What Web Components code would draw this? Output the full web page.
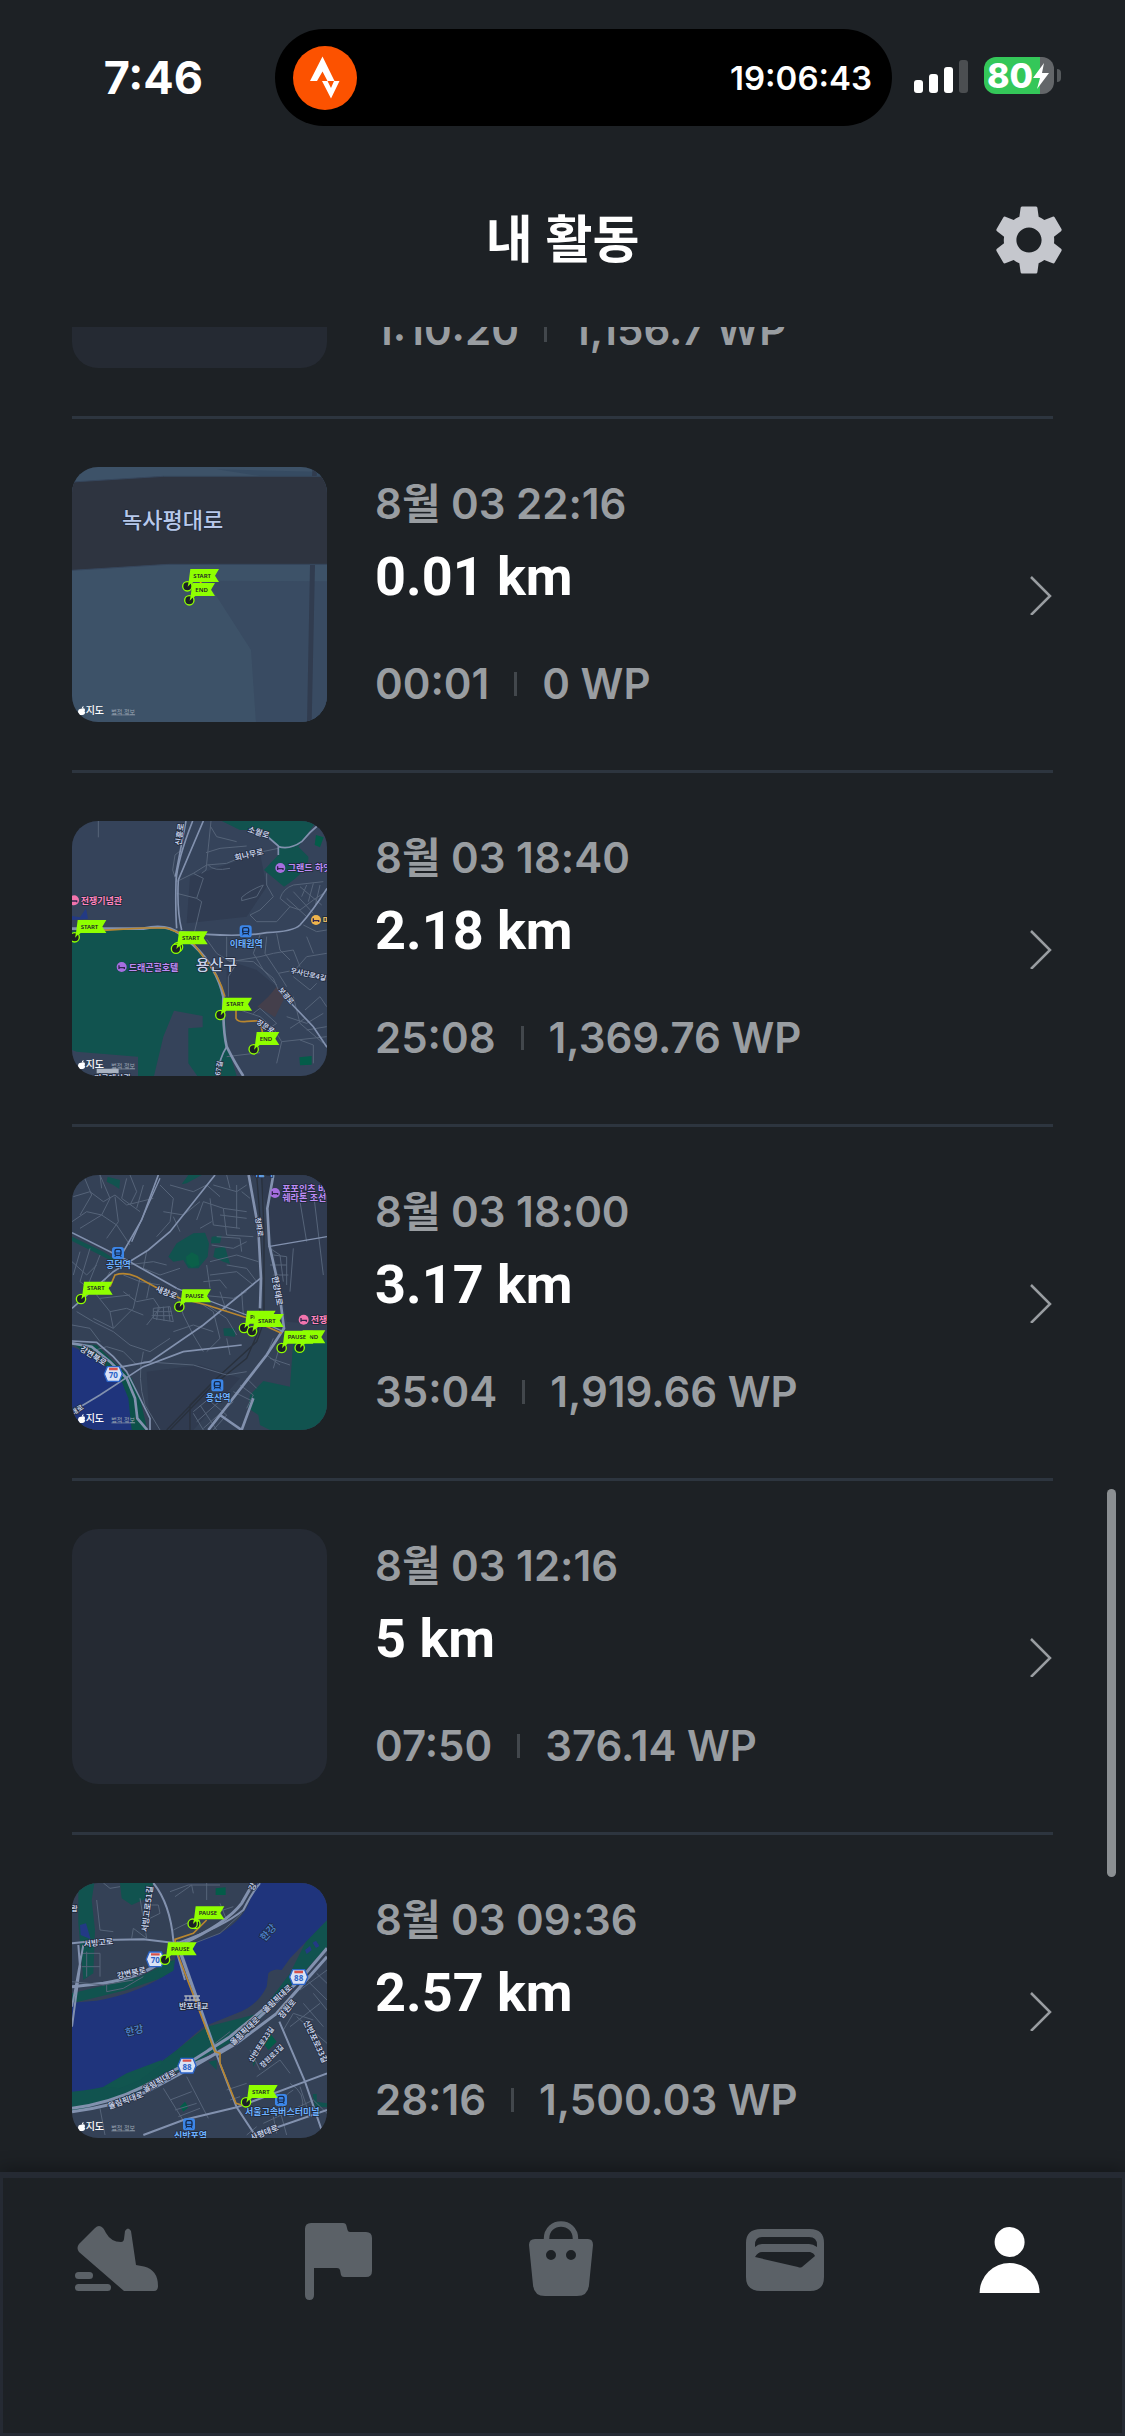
<!DOCTYPE html>
<html lang="ko">
<head>
<meta charset="utf-8">
<meta name="viewport" content="width=device-width, initial-scale=1">
<title>내 활동</title>
<style>
  :root {
    --bg: #1d2125;
    --panel: #252a33;
    --line: #2d353f;
    --muted: #999da1;
    --icon: #5b6167;
    --font: Inter, "Noto Sans CJK KR", sans-serif;
  }
  body {
    margin: 0;
    background: var(--bg);
    color: #fff;
    font-family: var(--font);
  }
</style>
</head>
<body>
<app-shell>
  <status-bar slot="top" time="7:46" activity="19:06:43" battery="80"></status-bar>
  <page-header slot="top">내 활동</page-header>

  <activity-item>
    <map-thumb slot="map"></map-thumb>
    <span slot="duration">1:10:20</span>
    <span slot="points">1,156.7 WP</span>
  </activity-item>
  <activity-item>
    <map-thumb slot="map" place="noksapyeong"></map-thumb>
    <time slot="date">8월 03 22:16</time>
    <span slot="distance">0.01 km</span>
    <span slot="duration">00:01</span>
    <span slot="points">0 WP</span>
  </activity-item>
  <activity-item>
    <map-thumb slot="map" place="yongsan"></map-thumb>
    <time slot="date">8월 03 18:40</time>
    <span slot="distance">2.18 km</span>
    <span slot="duration">25:08</span>
    <span slot="points">1,369.76 WP</span>
  </activity-item>
  <activity-item>
    <map-thumb slot="map" place="gongdeok"></map-thumb>
    <time slot="date">8월 03 18:00</time>
    <span slot="distance">3.17 km</span>
    <span slot="duration">35:04</span>
    <span slot="points">1,919.66 WP</span>
  </activity-item>
  <activity-item>
    <map-thumb slot="map"></map-thumb>
    <time slot="date">8월 03 12:16</time>
    <span slot="distance">5 km</span>
    <span slot="duration">07:50</span>
    <span slot="points">376.14 WP</span>
  </activity-item>
  <activity-item>
    <map-thumb slot="map" place="banpo"></map-thumb>
    <time slot="date">8월 03 09:36</time>
    <span slot="distance">2.57 km</span>
    <span slot="duration">28:16</span>
    <span slot="points">1,500.03 WP</span>
  </activity-item>

  <tab-bar slot="bottom">
    <tab-item icon="shoe" label="운동"></tab-item>
    <tab-item icon="flag" label="챌린지"></tab-item>
    <tab-item icon="bag" label="상점"></tab-item>
    <tab-item icon="wallet" label="지갑"></tab-item>
    <tab-item icon="person" label="내 활동" active></tab-item>
  </tab-bar>
</app-shell>

<script>
  const SCROLL_START = 262

  const ICONS = {
    shoe: `
      <path d="M25 13Q29 9 33 13Q34 14 36 18Q41 27 51 27Q53.600 27 54 24L55 16Q58 11 61 16L66 50L74 51.500Q88 55 88 71Q88 76 84 76H54L9 37Q6 33 9 29Z"/>
      <rect x="5" y="57" width="18" height="7" rx="3.500"/>
      <rect x="5" y="69" width="36" height="7" rx="3.500"/>`,
    flag: `<path d="M11 14Q11 8 17 8H49Q52 8 52.500 11L53.500 15Q54 17 56 17H72Q78 17 78 23V56Q78 62 72 62H50Q47.500 62 47 60L46 55Q45.500 53 43 53H20V80Q20 85 15.500 85Q11 85 11 80Z"/>`,
    bag: `
      <path fill-rule="evenodd" d="M12 30Q12 24 18 24H71Q76 24 76 30L72 70Q71 81 60 81H28Q17 81 16 70ZM29 40a5 5 0 1 0 10 0a5 5 0 1 0-10 0ZM49 40a5 5 0 1 0 10 0a5 5 0 1 0-10 0Z"/>
      <path d="M29.500 26V24C29.500 4 58.500 4 58.500 24V26" fill="none" stroke="currentColor" stroke-width="5.500"/>`,
    wallet: `<path fill-rule="evenodd" d="M20 14H69Q83 14 83 28V62Q83 76 69 76H20Q5 76 5 62V28Q5 14 20 14ZM14 32V30Q14 22 21 22H68Q76 22 76 30V32Q72 29 68 29H21Q17 29 14 32ZM14 42Q17 37 21 37H69Q73 38 74 41L61 52Q59 53 57 52Z"/>`,
    person: `<circle cx="44.600" cy="27" r="15"/><path d="M14.600 78A30 30 0 0 1 74.600 78Z"/>`
  }

  const dot = (x, y) => `
    <circle cx="${x}" cy="${y}" r="14" fill="#1c2126" stroke="#8fff00" stroke-width="4"/>
    <path fill="#8fff00" d="M${x + 4} ${y - 14}L${x + 14} ${y - 12}L${x + 1} ${y + 1}Z"/>`

  // a pin is a dot on the route with a pennant above it
  const pin = (x, y, text) => {
    const w = text === 'END' ? 77 : 95
    return `
      <path fill="#8fff00" d="M${x + 9} ${y - 52}H${x + w}L${x + w - 12} ${y - 32}L${x + w} ${y - 13}H${x + 18}L${x + 2} ${y + 2}Z"/>
      ${dot(x, y)}
      <text class="pin" x="${x + 18}" y="${y - 26}">${text}</text>`
  }

  const label = (x, y, text, opts = {}) => {
    const { size = 24, color = '#c3cee6', angle = 0, weight = 700 } = opts
    return `<text x="${x}" y="${y}" font-size="${size}" font-weight="${weight}" fill="${color}" transform="rotate(${angle} ${x} ${y})">${text}</text>`
  }

  const spot = (x, y, color) => `
    <circle cx="${x}" cy="${y}" r="15" fill="${color}"/>
    <path d="M${x - 8} ${y - 5}V${y + 6}M${x - 8} ${y + 2}H${x + 8}V${y + 6}" fill="none" stroke="#32244f" stroke-width="4"/>`

  const station = (x, y) => `
    <rect x="${x - 18}" y="${y - 18}" width="36" height="36" rx="8" fill="#3c86e8"/>
    <rect x="${x - 9}" y="${y - 11}" width="18" height="18" rx="5" fill="none" stroke="#14294d" stroke-width="4"/>
    <path d="M${x - 9} ${y}H${x + 9}M${x - 6} ${y + 7}L${x - 10} ${y + 12}M${x + 6} ${y + 7}L${x + 10} ${y + 12}" stroke="#14294d" stroke-width="3"/>`

  const shield = (x, y, num) => `
    <path d="M${x - 18} ${y - 22}H${x + 18}L${x + 27} ${y}L${x + 18} ${y + 22}H${x - 18}L${x - 27} ${y}Z" fill="#d9e2f5" stroke="#2a63c8" stroke-width="4"/>
    <path d="M${x - 13} ${y - 15}H${x + 13}" stroke="#d8524a" stroke-width="7"/>
    <text class="shield" x="${x}" y="${y + 12}">${num}</text>`

  const PURPLE = { color: '#bd8cf5', size: 27 }
  const PINK = { color: '#ff84bd', size: 27 }
  const BLUE = { color: '#6cb0ff', size: 27 }

  const MAPS = {
    noksapyeong: {
      top: 51,
      art: () => `
        <path fill="#3d5268" d="M0 0H840V840H0Z"/>
        <path fill="#394b62" d="M440 392L801 394V820H588L573 600Z"/>
        <path fill="#364b62" d="M470 58L801 66V78H600Z"/>
        <path fill="#2e3440" d="M36 96L310 79H801V343H325L36 361Z"/>
        <path d="M36 96L310 79H801M36 361L325 343H801" fill="none" stroke="#36465c" stroke-width="3"/>
        <path fill="#313c4f" d="M750 345H765L755 820H741ZM758 51H772L770 78H756Z"/>
        ${label(186, 234, '녹사평대로', { size: 66, color: '#b7c8ea', weight: 500 })}
        <circle cx="422" cy="398" r="3" fill="#ff9d00"/>
        ${pin(382, 409, 'START')}${pin(388, 451, 'END')}`
    },
    yongsan: {
      top: 33,
      art: () => `
        <path fill="#35435a" d="M0 0H840V840H0Z"/>
        <path fill="#303c52" d="M500 450L590 480L650 530L590 610L500 600ZM390 200L600 130L620 230L560 320L380 340Z"/>
        <path class="park" d="M36 362L330 356L400 405Q480 480 492 560L500 700L530 798H412L385 760V655L428 652V618L342 602L310 680L282 798H234V740L50 725L36 720Z"/>
        <path class="park" d="M485 33H770L715 110L745 140Q750 180 672 230L612 180L655 135V108L600 60H540Z"/>
        <path fill="#045c49" d="M768 75L791 82L780 112L764 105ZM718 742L755 738V764L720 766Z"/>
        <path fill="#443f4b" d="M592 590L625 560L650 530L675 560L645 622L610 600Z"/>
        <path fill="#233a85" d="M36 318L60 322L78 295L84 326L36 330Z"/>
        <path class="minor" d="M115 33V82M453 33L438 180L425 190M452 50L470 80L530 95M438 128L480 115L560 108M350 215L400 190L440 165L500 160L560 135L655 115M370 115L345 135L338 180L350 215M350 250L410 265L425 275L400 380M410 265L430 205L400 190M445 165Q460 185 510 175M440 388L470 430L510 455L600 440L640 430M500 380V450L580 455L640 505L655 540M600 375L580 430L610 480L650 525M545 262Q570 240 610 225L590 260L545 272ZM620 190V225L640 260L600 300L570 315L590 335H650L690 290L660 265Q670 235 700 225L790 215M690 290L720 300L760 270L790 250M700 245L760 310M680 265L740 320M720 230L785 285M740 225L725 260M760 220L745 275M780 225L765 290M620 380L615 430L655 490L705 480L740 440L800 430M640 430L700 420L720 470M730 345L770 365L800 360M740 380L760 430M650 370L660 420L690 450M540 600L600 620L640 655L665 695L800 680M580 610L600 595L650 640L620 660M665 695L650 760M700 560L720 640L790 700M680 620L740 640L790 610M690 655L735 625M735 600L780 560L800 590M720 690L760 705V760M740 660L800 650M500 740L600 728M530 460L505 500V560M655 490L680 530M700 500L750 540L770 520"/>
        <path class="major" d="M360 365Q520 385 620 368Q700 365 720 345Q760 300 801 235M350 355Q346 300 348 215Q352 150 398 33M655 110Q690 120 725 95Q750 65 775 45M600 60L655 108V135M655 540L760 650L801 712" stroke-width="5"/>
        <path class="major" d="M36 356H250Q320 340 360 372L400 405Q470 470 490 560Q488 660 500 710Q525 760 550 798" stroke-width="8"/>
        <path class="major" d="M346 200L378 33M430 33L355 210Q350 300 365 360M500 710Q480 740 470 798" stroke-width="5"/>
        <path class="route" d="M130 361L250 354L320 354L360 370L400 400L430 440Q480 500 495 560M528 600V625Q535 638 560 634L600 632L610 680"/>
        ${label(363, 107, '신흥로', { angle: -82 })}
        ${label(562, 65, '소월로', { angle: 18 })}
        ${label(526, 152, '회나무로', { angle: -13 })}
        ${label(690, 488, '우사단로4길', { angle: 13, size: 21 })}
        ${label(655, 540, '보광로', { angle: 50, size: 21 })}
        ${label(588, 640, '장문로', { angle: 32, size: 21 })}
        ${label(480, 798, '67길', { angle: -80, size: 21 })}
        ${spot(661, 174, '#a66ee0')}${label(683, 184, '그랜드 하얏', PURPLE)}
        ${spot(42, 271, '#f274ad')}${label(62, 281, '전쟁기념관', PINK)}
        ${spot(185, 471, '#a66ee0')}${label(206, 482, '드래곤힐호텔', PURPLE)}
        ${spot(768, 330, '#efb44c')}${label(788, 338, '마', { color: '#f4c469', size: 24 })}
        ${station(557, 364)}${label(509, 411, '이태원역', BLUE)}
        ${label(407, 480, '용산구', { size: 45, color: '#c9d4ea', weight: 500 })}
        <path fill="#aab4c2" d="M110 776H176V790H110Z"/>
        ${label(102, 812, '미국대사관', { size: 24 })}
        ${pin(44, 382, 'START')}
        ${dot(354, 411)}${pin(348, 416, '')}<text class="pin" x="366" y="390">START</text>
        ${pin(481, 615, 'START')}${pin(581, 718, 'END')}`
    },
    gongdeok: {
      top: 30,
      art: () => `
        <path fill="#344156" d="M0 0H840V840H0Z"/>
        <path fill="#303b50" d="M600 30H801V480L680 470ZM260 620L420 600L540 640L400 795H270Z"/>
        <path class="park" d="M325 275L350 235L400 205L435 203L447 235L443 275L415 310H385L370 285L340 290ZM143 35L180 45L178 72L160 60L140 50ZM365 58L385 30H425L380 55ZM455 215L485 212L480 235H453ZM465 250L495 245L510 297L490 290L460 275ZM490 490H525V515L492 512Z"/>
        <path class="park" d="M801 525H700L690 665L610 648L570 690L565 730L595 750L600 780L630 795H801ZM36 215L130 260L190 300L150 285L36 228Z"/>
        <path fill="#0b6049" d="M378 275L395 262L415 272L418 300L395 308L380 295Z"/>
        <path fill="#0d5149" d="M36 535L110 540L160 590L215 640L240 700L262 795H190L170 680L100 580Z"/>
        <path fill="#1f347c" d="M36 545L95 570L145 610L185 650L205 700L215 795H36Z"/>
        <path class="rail" d="M590 30L600 160L605 340L595 500L560 580L460 660L330 795M605 30L612 200V470L590 530L470 640L390 720V795M320 795L450 660"/>
        <path class="minor" d="M40 95L90 80L130 110L165 90L200 120L280 100M70 30L95 90L60 150M120 30L150 100L125 150L60 190M165 95L175 170L140 220M200 40L185 100L240 140M36 170L80 140L125 150L170 180L210 240M300 60L340 100L330 170L290 215M310 140L370 150L420 110M330 60L400 80L440 60L480 95M360 200L340 155M410 165L430 110L490 130L560 140M450 100L460 180L540 190M490 130L500 210L580 215M530 60V190M480 150L560 160M460 60L530 80L560 60M420 190L455 170M450 290L530 270L595 290M455 240L520 250L560 230M500 300L560 310L590 350M450 330L530 320L580 360M440 300L450 370M260 260L250 310L300 330L360 310M200 300L280 290L320 300M36 290L80 330L110 300M60 260L40 330M90 250L60 350L100 380M120 270L80 370M150 320L110 390L150 440L160 490M190 330L240 350L300 360M190 380L230 410L280 400L300 430L260 480M150 440L200 430L250 450M120 400L210 390M240 340L220 430L160 490L100 460M50 440L100 470L160 500L210 540M36 480L90 490L120 530M280 430L330 425L340 470L280 460ZM295 425L290 465M310 425L312 468M325 425L330 468M280 440L335 440M275 452L337 452M350 380L370 450L400 510L430 560M400 400L460 440L480 520L440 560M420 390L520 400L560 380M440 420L500 460L530 510M480 380L500 440M545 380L550 450M340 500L400 480L460 500M210 540L270 560L330 520M250 590L400 600L500 630L560 620M500 520L510 570M630 250L660 270L670 350M640 270L680 275V360M630 300L680 300M640 330L685 330M700 250L690 380M720 110L740 230M760 80L790 330M640 520L620 570L660 600M660 540L640 610M630 580L690 600M540 660L580 690L560 730M560 640L590 670M520 680L580 710M440 700L500 750L460 795M420 720L470 795M400 745L430 795M400 740L460 690M250 560Q230 640 255 720L300 795"/>
        <path class="minor" d="M410 770L500 690M430 790L520 710M120 30L125 70M210 30L230 80L210 120M250 60L230 130M500 30L510 70M545 80L570 100M470 215L540 220L545 260M430 350L480 345L500 370M270 350L260 400M90 560L140 545L190 560L230 600"/>
        <path class="major" d="M36 203L200 285L350 370M36 430L160 320L265 255L330 200L465 30M295 30L245 165L190 260M601 340L430 480L270 590L160 610M36 528L110 532L160 575L200 620L235 690L270 760V795M545 540L370 560L250 605L120 690L36 740" stroke-width="5"/>
        <path class="major" d="M566 30L595 190L603 340L600 430M640 30L622 130L628 240L655 360L672 490L620 570L445 795M36 535L95 545L150 590L200 640L225 700L232 760L262 795M480 750L545 795L580 700" stroke-width="8"/>
        <path class="major" d="M300 40L215 230M350 370L560 450L670 500M625 245L801 215" stroke-width="4"/>
        <path class="route" d="M150 365L165 330Q195 320 230 335L290 368L360 400L440 420L560 458L665 505"/>
        ${label(586, 158, '청파로', { angle: 82, size: 21 })}
        ${label(636, 335, '한강대로', { angle: 80 })}
        ${label(285, 378, '새창로', { angle: 22 })}
        ${label(58, 556, '강변북로', { angle: 32 })}
        ${label(40, 752, '대로', { angle: -34, size: 21 })}
        ${label(572, 34, '서울역', { ...BLUE, size: 24 })}
        ${spot(645, 84, '#a66ee0')}${label(667, 81, '포포인츠 바', PURPLE)}${label(667, 109, '쉐라톤 조선', PURPLE)}
        ${spot(731, 464, '#f274ad')}${label(752, 474, '전쟁', PINK)}
        ${station(174, 264)}${label(138, 310, '공덕역', BLUE)}
        ${station(472, 661)}${label(437, 708, '용산역', BLUE)}
        ${shield(160, 627, '70')}
        ${pin(63, 402, 'START')}${pin(358, 425, 'PAUSE')}
        ${pin(552, 489, 'PAUSE')}${pin(576, 499, 'START')}
        ${pin(719, 548, 'END')}${pin(665, 549, 'PAUSE')}`
    },
    banpo: {
      top: 39,
      art: () => `
        <path fill="#344156" d="M0 0H840V840H0Z"/>
        <path class="park" d="M55 39H103L95 90L105 180L100 310L70 330L55 160ZM180 39H280L270 80L215 105L185 85ZM36 370L240 320L340 270L345 310L200 360L36 400ZM801 150L740 210L690 310L600 430L440 470L310 570L200 640L36 660V725L200 680L400 580L560 490L700 340L801 230Z"/>
        <path fill="#1f347c" d="M590 39H801V150L690 265L665 300Q640 295 625 310L620 350Q590 410 530 430L430 470L350 540L270 600L180 640Q100 660 36 665V398L110 392Q240 370 340 300L350 235L480 190Q550 150 570 90Z"/>
        <path fill="#11554f" d="M130 650L200 610L305 570V582L240 630L180 655ZM295 290L345 270L340 302L300 325Z"/>
        <path fill="#233a85" d="M735 240L750 228L755 240L740 252ZM758 218L768 212L778 228L768 234ZM60 165L78 160L92 208L62 195Z"/>
        <path fill="#045c49" d="M610 520L630 490L650 515L625 540ZM467 55L497 52V75H467ZM360 710L375 695L385 712L370 725Z"/>
        <path class="park" d="M445 575L470 570V600ZM575 550L590 570L580 590ZM758 672H770V695L801 700V712L765 710Z"/>
        <path class="minor" d="M130 39L150 55L180 50M330 65L385 45H480M345 80L395 45L400 70M270 105H295L300 130L270 145M240 85L260 205L220 175L215 205M110 90L120 180L160 185M65 250H120V320M65 290H120M80 245V320M480 100L500 150M340 180L400 150L520 110M440 39V90M310 655L375 760M380 620L445 745M330 690L395 665M345 720L410 700M355 740L420 715M120 715L135 795M600 600L570 540M590 620L660 570L690 610M670 480L700 430L760 450M690 470L780 400M710 440L801 520M730 400L790 470M760 370L801 420M720 360L801 300M745 335L801 390M770 310L801 340M640 650L680 795M690 640Q740 670 725 720Q690 760 670 720Q660 680 700 660M500 660L560 640M510 690L540 680M610 760L760 690L801 730M720 650L750 740M650 790L640 740M590 770L560 795M440 540L510 485"/>
        <path class="major" d="M280 39Q330 100 340 210L375 330M36 220L130 210L250 208L350 220Q490 170 550 120Q575 70 600 39M55 225L60 290L36 470M70 225L36 410M658 455L735 635L790 795M400 580L460 555M250 795L370 750L530 712L735 635L801 610M36 795L60 780M470 555L530 712L585 795L801 720" stroke-width="6"/>
        <path class="major" d="M36 350L130 340Q250 320 310 270M310 270L360 225Q500 160 545 100L580 39M36 725Q160 710 260 665L400 590L520 520L600 440L720 330L801 235M36 715Q150 700 250 650L400 570L510 500L620 410M470 555L530 520L650 430L801 260" stroke-width="9"/>
        <path class="minor" d="M36 335L130 345L220 330M140 345V365L190 355L250 320M350 240L480 190L545 130"/>
        <path class="major" d="M350 215L470 555" stroke-width="10"/>
        <path class="route" d="M440 150L400 190L345 208L352 250L465 545L480 550V580L528 700L545 705"/>
        ${label(262, 187, '서빙고로51길', { angle: -83 })}
        ${label(72, 231, '서빙고로', { angle: -6 })}
        ${label(173, 327, '강변북로', { angle: -13 })}
        ${label(580, 64, '강변', { angle: -62 })}
        ${label(614, 215, '한강', { angle: -48, size: 30, color: '#477bc4' })}
        ${label(199, 499, '한강', { angle: -14, size: 30, color: '#477bc4' })}
        ${label(520, 527, '올림픽대로', { angle: -43 })}
        ${label(617, 430, '올림픽대로', { angle: -43 })}
        ${label(255, 668, '올림픽대로', { angle: -30 })}
        ${label(148, 718, '올림픽대로', { angle: -20 })}
        ${label(667, 447, '잠원로', { angle: -50 })}
        ${label(577, 578, '신반포로23길', { angle: -57, size: 21 })}
        ${label(608, 595, '잠원로3길', { angle: -44, size: 21 })}
        ${label(730, 455, '신반포로33길', { angle: 65 })}
        ${label(575, 812, '사평대로', { angle: -22 })}
        ${label(34, 122, '람', { size: 21 })}
        <path d="M373 378H420M373 390H420M378 378V394M390 378V394M402 378V394M414 378V394" fill="none" stroke="#a9afb8" stroke-width="4"/>
        ${label(357, 417, '반포대교')}
        ${station(663, 690)}${label(555, 736, '서울고속버스터미널', BLUE)}
        ${station(387, 763)}${label(342, 806, '신반포역', BLUE)}
        ${shield(286, 268, '70')}${shield(716, 321, '88')}${shield(381, 587, '88')}
        ${dot(406, 162)}
        ${pin(398, 161, 'PAUSE')}${pin(315, 269, 'PAUSE')}${pin(558, 697, 'START')}`
    }
  }

  customElements.define('app-shell', class extends HTMLElement {
    constructor() {
      super()
      this.attachShadow({ mode: 'open' }).innerHTML = `
        <style>
          :host { display: flex; flex-direction: column; height: 100vh; }
          .body { position: relative; flex: 1; min-height: 0; }
          .scroller {
            height: 100%;
            overflow-y: auto;
            scrollbar-width: none;
            box-sizing: border-box;
          }
          /* thumb floats over the rows */
          .thumb {
            position: absolute;
            right: 9px;
            top: 63%;
            width: 9px;
            height: 21%;
            border-radius: 5px;
            background: #8b8f92;
          }
        </style>
        <slot name="top"></slot>
        <main class="body">
          <div class="scroller"><slot></slot></div>
          <div class="thumb"></div>
        </main>
        <slot name="bottom"></slot>`
    }

    connectedCallback() {
      requestAnimationFrame(() => {
        this.shadowRoot.querySelector('.scroller').scrollTop = SCROLL_START
      })
    }
  })

  customElements.define('status-bar', class extends HTMLElement {
    connectedCallback() {
      this.attachShadow({ mode: 'open' }).innerHTML = `
        <style>
          :host {
            display: grid;
            grid-template-columns: 275fr 617fr 233fr;
            align-items: center;
            height: 155px;
            font-weight: 600;
          }
          .clock { justify-self: end; margin-right: 72px; font-size: 45px; font-weight: 700; }
          .island {
            display: flex;
            align-items: center;
            justify-content: space-between;
            box-sizing: border-box;
            height: 97px;
            padding: 0 20px 0 18px;
            border-radius: 49px;
            background: #000;
            font-size: 33px;
          }
          .right { display: flex; align-items: center; gap: 16px; margin-left: 22px; padding-bottom: 4px; }
          .battery { display: flex; align-items: center; gap: 3px; }
          .cell {
            display: flex;
            align-items: center;
            box-sizing: border-box;
            width: 70px;
            height: 37px;
            padding-left: 3px;
            border-radius: 12px;
            background: linear-gradient(90deg, #34c759 80%, #636669 80%);
            font-size: 34px;
            font-weight: 800;
          }
          .nub { width: 4px; height: 13px; border-radius: 0 4px 4px 0; background: #55595c; }
          svg { display: block; flex: none; }
        </style>
        <span class="clock">${this.getAttribute('time')}</span>
        <div class="island">
          <svg width="64" height="64" viewBox="0 0 64 64">
            <circle cx="32" cy="32" r="32" fill="#fc5200"/>
            <path fill="#fff" d="M29.500 10.500L41.500 35H34.500L29.500 25.500L24 35H17Z"/>
            <path fill="#fff" d="M29 35H34.500L38 42L41 35H46.500L38 52.500Z"/>
          </svg>
          <span>${this.getAttribute('activity')}</span>
        </div>
        <div class="right">
          <svg width="54" height="34" viewBox="0 0 54 34" fill="#fff">
            <rect y="21" width="9" height="13" rx="3"/>
            <rect x="15" y="15" width="9" height="19" rx="3"/>
            <rect x="30" y="8" width="9" height="26" rx="3"/>
            <rect x="45" y="1" width="9" height="33" rx="3" fill="#4b4e51"/>
          </svg>
          <div class="battery">
            <div class="cell">
              <span>${this.getAttribute('battery')}</span>
              <svg width="16" height="26" viewBox="0 0 16 26"><path fill="#fff" d="M11 0L0 15H7L4 26L16 10H9Z"/></svg>
            </div>
            <div class="nub"></div>
          </div>
        </div>`
    }
  })

  customElements.define('page-header', class extends HTMLElement {
    constructor() {
      super()
      this.attachShadow({ mode: 'open' }).innerHTML = `
        <style>
          :host {
            display: grid;
            grid-template-columns: 1fr auto 1fr;
            align-items: center;
            box-sizing: border-box;
            height: 172px;
            padding: 0 54px 2px;
          }
          h1 {
            grid-column: 2;
            margin: 0;
            font-size: 51px;
            line-height: 64px;
            font-weight: 600;
          }
          button {
            justify-self: end;
            padding: 0;
            border: 0;
            background: none;
            color: #c5c7cd;
          }
          svg { display: block; }
        </style>
        <h1><slot></slot></h1>
        <button aria-label="설정">
          <svg width="84" height="84" viewBox="0 0 24 24" fill="currentColor">
            <path d="M19.140 12.940c.04-.3.060-.61.060-.94 0-.32-.02-.64-.07-.94l2.030-1.580c.18-.14.230-.41.120-.61l-1.920-3.320c-.12-.22-.37-.29-.59-.22l-2.390.96c-.5-.38-1.030-.7-1.620-.94l-.36-2.540c-.04-.24-.24-.41-.48-.41h-3.840c-.24 0-.43.17-.47.41l-.36 2.540c-.59.24-1.130.57-1.620.94l-2.390-.96c-.22-.08-.47 0-.59.22L2.740 8.870c-.12.21-.08.47.120.61l2.030 1.580c-.05.3-.09.63-.09.94s.02.64.070.940l-2.030 1.580c-.18.14-.23.41-.12.61l1.920 3.320c.12.22.37.29.59.22l2.390-.96c.5.38 1.030.7 1.620.94l.36 2.540c.05.24.24.41.48.41h3.840c.24 0 .44-.17.47-.41l.36-2.540c.59-.24 1.130-.56 1.620-.94l2.390.96c.22.080.47 0 .59-.22l1.920-3.320c.12-.22.070-.47-.12-.61l-2.010-1.580zM12 15.600c-1.980 0-3.600-1.620-3.600-3.600s1.620-3.600 3.600-3.600 3.600 1.620 3.600 3.600-1.620 3.600-3.600 3.600z"/>
          </svg>
        </button>`
    }
  })

  customElements.define('activity-item', class extends HTMLElement {
    constructor() {
      super()
      this.attachShadow({ mode: 'open' }).innerHTML = `
        <style>
          :host { display: block; margin: 0 72px; border-bottom: 3px solid var(--line); }
          a {
            display: flex;
            gap: 48px;
            padding: 48px 0;
            color: inherit;
            text-decoration: none;
          }
          .info {
            flex: 1;
            display: grid;
            grid-template-rows: 50px 60px auto;
            row-gap: 18px;
            align-content: start;
            padding-top: 12px;
            color: var(--muted);
            font-size: 42px;
            line-height: 50px;
            font-weight: 600;
          }
          .distance { color: #fff; font-family: Roboto, sans-serif; font-size: 54px; line-height: 60px; font-weight: 700; }
          .meta { display: flex; align-items: center; gap: 25px; margin-top: 34px; }
          .meta i { width: 3px; height: 24px; background: #42474c; }
          svg { align-self: center; margin-right: 1px; }
        </style>
        <a href="#">
          <slot name="map"></slot>
          <div class="info">
            <div class="date"><slot name="date"></slot></div>
            <div class="distance"><slot name="distance"></slot></div>
            <div class="meta"><slot name="duration"></slot><i></i><slot name="points"></slot></div>
          </div>
          <svg width="22" height="40" viewBox="0 0 22 40" fill="none" stroke="#999da1" stroke-width="2.500">
            <path d="M1 2L20 21L1 40"/>
          </svg>
        </a>`
    }
  })

  customElements.define('map-thumb', class extends HTMLElement {
    connectedCallback() {
      const map = MAPS[this.getAttribute('place')]
      this.attachShadow({ mode: 'open' }).innerHTML = `
        <style>
          :host {
            display: block;
            flex: none;
            width: 255px;
            height: 255px;
            border-radius: 26px;
            overflow: hidden;
            background: var(--panel);
          }
          svg { display: block; width: 100%; height: 100%; }
          text { font-family: "Noto Sans CJK KR", sans-serif; paint-order: stroke; stroke: #1f2838; stroke-width: 4px; }
          .park { fill: #11534f; }
          .minor { fill: none; stroke: #566479; stroke-width: 3; }
          .major { fill: none; stroke: #8291ae; }
          .rail { fill: none; stroke: #29313d; stroke-width: 4; }
          .route { fill: none; stroke: #b8862f; stroke-width: 5; }
          .pin { font: 600 18px "Noto Sans", sans-serif; fill: #1c2126; stroke: none; }
          .shield { font: 700 24px "Noto Sans", sans-serif; fill: #2a63c8; stroke: none; text-anchor: middle; }
          .brand { fill: #fff; stroke: none; font-size: 30px; font-weight: 500; }
          .legal { fill: #9aa4b2; stroke: none; font-size: 18px; text-decoration: underline; }
        </style>
        ${map ? `<svg viewBox="36 ${map.top} 765 765">${map.art()}${this.credits(map.top)}</svg>` : ''}`
    }

    credits(top) {
      const y = top + 740
      return `
        <path fill="#fff" d="M65 ${y - 15}Q66 ${y - 22} 71 ${y - 23}Q71 ${y - 16} 66 ${y - 15}Q75 ${y - 18} 75 ${y - 11}Q72 ${y - 5} 76 ${y - 3}Q72 ${y + 6} 65 ${y + 4}Q56 ${y + 6} 54 ${y - 5}Q54 ${y - 16} 65 ${y - 15}Z"/>
        <text class="brand" x="77" y="${y + 2}">지도</text>
        <text class="legal" x="154" y="${y}">법적 정보</text>`
    }
  })

  customElements.define('tab-bar', class extends HTMLElement {
    constructor() {
      super()
      this.attachShadow({ mode: 'open' }).innerHTML = `
        <style>
          :host {
            display: block;
            position: relative;
            box-shadow: 0 -4px 16px rgba(0, 0, 0, .3);
          }
          nav {
            display: flex;
            box-sizing: border-box;
            height: 264px;
            border: 3px solid var(--panel);
            border-top-width: 6px;
            padding-top: 37px;
          }
        </style>
        <nav><slot></slot></nav>`
    }
  })

  customElements.define('tab-item', class extends HTMLElement {
    connectedCallback() {
      this.attachShadow({ mode: 'open' }).innerHTML = `
        <style>
          :host { display: flex; flex: 1; justify-content: center; align-items: flex-start; }
          button { padding: 0; border: 0; background: none; color: var(--icon); }
          :host([active]) button { color: #fff; }
          svg { display: block; }
        </style>
        <button aria-label="${this.getAttribute('label')}">
          <svg width="90" height="90" viewBox="0 0 90 90" fill="currentColor">${ICONS[this.getAttribute('icon')]}</svg>
        </button>`
    }
  })
</script>
</body>
</html>
